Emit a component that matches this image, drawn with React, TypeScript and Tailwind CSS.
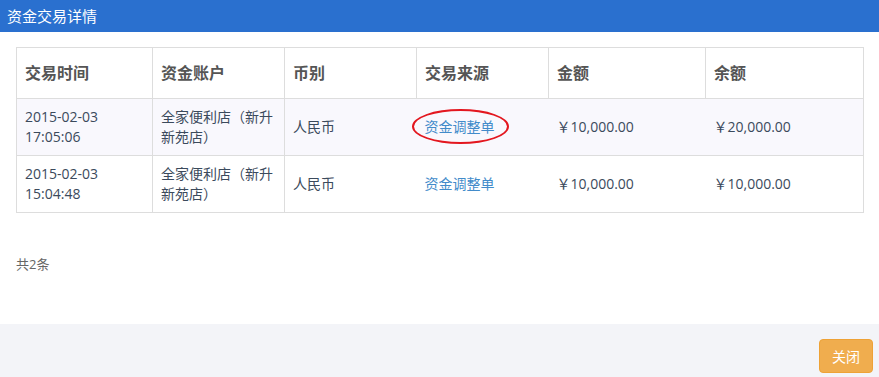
import React from 'react';

const rows = [
  { time: ['2015-02-03', '17:05:06'], account: '全家便利店（新升新苑店）', currency: '人民币', source: '资金调整单', amount: '￥10,000.00', balance: '￥20,000.00', marked: true },
  { time: ['2015-02-03', '15:04:48'], account: '全家便利店（新升新苑店）', currency: '人民币', source: '资金调整单', amount: '￥10,000.00', balance: '￥10,000.00', marked: false },
];

const headers = ['交易时间', '资金账户', '币别', '交易来源', '金额', '余额'];
const widths = ['w-[136px]', 'w-[132px]', 'w-[132px]', 'w-[132px]', 'w-[157px]', 'w-[158px]'];

export default function App() {
  return (
    <div className="w-[879px] h-[377px] flex flex-col bg-white overflow-hidden font-['Open_Sans','Noto_Sans_CJK_SC',sans-serif]">
      {/* Title bar */}
      <div className="h-[32px] bg-[#2a70cf] flex items-center px-[7px]">
        <span className="text-white text-[15px]">资金交易详情</span>
      </div>

      {/* Body */}
      <div className="flex-1 px-4 pt-[15px]">
        <table className="w-[847px] table-fixed border-collapse border border-[#ddd]">
          <colgroup>
            {widths.map((w, i) => (
              <col key={i} className={w} />
            ))}
          </colgroup>
          <thead>
            <tr>
              {headers.map((h) => (
                <th key={h} className="border border-[#ddd] px-2 py-[15px] text-left text-[16px] leading-[20px] font-bold text-[#555]">
                  {h}
                </th>
              ))}
            </tr>
          </thead>
          <tbody>
            {rows.map((r, i) => (
              <tr key={i} className={i === 0 ? 'bg-[#f9f8fd]' : 'bg-white'}>
                <td className="border border-[#ddd] px-2 py-2 text-[14px] leading-[20px] text-[#3b4a5c] align-middle">
                  {r.time[0]}
                  <br />
                  {r.time[1]}
                </td>
                <td className="border border-[#ddd] px-2 py-2 text-[14px] leading-[20px] text-[#3b4a5c] align-middle">{r.account}</td>
                <td className="border-y border-[#ddd] px-2 py-2 text-[14px] leading-[20px] text-[#3b4a5c] align-middle">{r.currency}</td>
                <td className="border-y border-[#ddd] px-2 py-2 text-[14px] leading-[20px] align-middle">
                  <span className="relative inline-block">
                    <a className="text-[#428bca]">{r.source}</a>
                    {r.marked && (
                      <span className="absolute left-[-13px] top-[-8px] w-[97px] h-[35px] rounded-[50%] border-2 border-[#e3171f]" />
                    )}
                  </span>
                </td>
                <td className="border-y border-[#ddd] px-2 py-2 text-[14px] leading-[20px] text-[#3b4a5c] align-middle">{r.amount}</td>
                <td className="border-y border-[#ddd] px-2 py-2 text-[14px] leading-[20px] text-[#3b4a5c] align-middle">{r.balance}</td>
              </tr>
            ))}
          </tbody>
        </table>

        <div className="mt-[42px] text-[13px] text-[#666]">共2条</div>
      </div>

      {/* Footer */}
      <div className="h-[53px] bg-[#f3f4f8] flex justify-end items-start pt-[15px] pr-[6px]">
        <button className="w-[54px] h-[34px] rounded-[4px] bg-[#f0ad4e] border border-[#eea236] text-white text-[14px]">
          关闭
        </button>
      </div>
    </div>
  );
}
